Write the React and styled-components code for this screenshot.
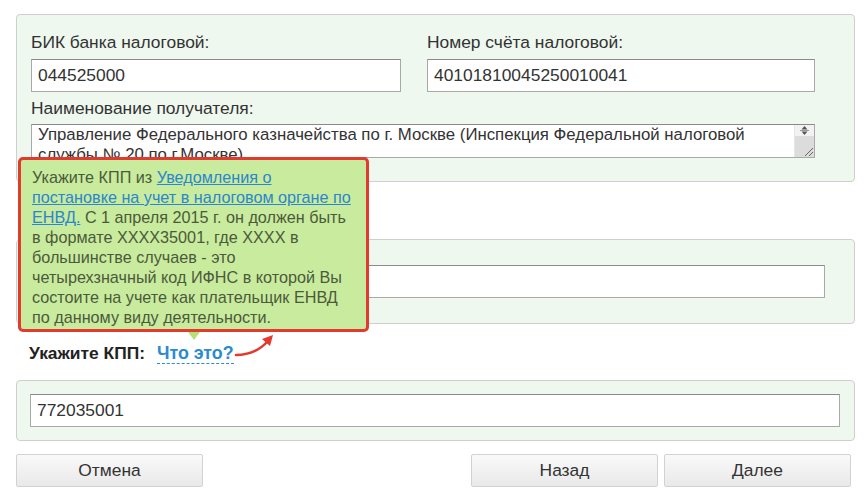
import React from "react";
import styled, { createGlobalStyle } from "styled-components";

const GlobalStyle = createGlobalStyle`
  html, body {
    margin: 0;
    padding: 0;
    background: #fff;
    font-family: "Liberation Sans", Arial, sans-serif;
  }
`;

const Page = styled.div`
  position: relative;
  width: 839px;
  padding-left: 16px;
  padding-top: 14px;
  height: 481px;
  overflow: hidden;
`;

const Panel = styled.div`
  background: #eef8ef;
  border: 1px solid #cfcfcf;
  border-radius: 4px;
  padding: ${(p) => p.$pad};
  margin-top: ${(p) => p.$top || "0"};
`;

const Grid = styled.div`
  display: grid;
  grid-template-columns: 370px 388px;
  column-gap: 26px;
`;

const Field = styled.div`
  display: flex;
  flex-direction: column;
`;

const Label = styled.div`
  font-size: 17.4px;
  line-height: 20px;
  color: #333;
  margin-bottom: ${(p) => p.$gap || "9px"};
  margin-top: ${(p) => p.$top || "0"};
`;

const Input = styled.div`
  box-sizing: border-box;
  height: 33px;
  background: #fff;
  border: 1px solid #a9a9a9;
  border-top-color: #8a8a8a;
  padding: 0 6px;
  font-size: 17.4px;
  line-height: 31px;
  color: #333;
  white-space: nowrap;
  overflow: hidden;
`;

const TextArea = styled.div`
  box-sizing: border-box;
  height: 34px;
  background: #fff;
  border: 1px solid #a9a9a9;
  border-top-color: #8a8a8a;
  display: flex;
  overflow: hidden;
`;

const AreaText = styled.div`
  flex: 1;
  padding: 0 6px;
  font-size: 16.8px;
  line-height: 20px;
  color: #333;
  margin-top: 0;
`;

const ScrollBar = styled.div`
  width: 19px;
  display: flex;
  flex-direction: column;
  border-left: 1px solid #e6e6e6;
`;

const ScrollTop = styled.div`
  height: 11px;
  background: #f2f2f2;
  display: flex;
  align-items: center;
  justify-content: center;
`;

const ScrollTrack = styled.div`
  flex: 1;
  background: #dcdcdc;
  display: flex;
  align-items: flex-end;
  justify-content: flex-end;
`;

const KppRow = styled.div`
  display: flex;
  align-items: baseline;
  gap: 12px;
  padding-left: 13px;
  margin-top: 18px;
  margin-bottom: 16px;
  font-size: 17.4px;
  line-height: 22px;
  font-weight: bold;
`;

const KppLabel = styled.span`
  color: #222;
`;

const WhatLink = styled.span`
  color: #2a8bd0;
  border-bottom: 1px dashed #2a8bd0;
  font-size: 17.8px;
  line-height: 20px;
`;

const Buttons = styled.div`
  display: flex;
  margin-top: 13px;
  width: 835px;
`;

const Button = styled.button`
  box-sizing: border-box;
  width: 187px;
  height: 33px;
  border: 1px solid #d2d2d2;
  border-radius: 2px;
  background: linear-gradient(#f9f9f9, #e9e9e9);
  font-family: "Liberation Sans", Arial, sans-serif;
  font-size: 17.4px;
  font-weight: normal;
  color: #333;
  margin-left: ${(p) => p.$ml || "0"};
  padding: 0;
`;

const Tooltip = styled.div`
  position: absolute;
  left: 18px;
  top: 157px;
  box-sizing: border-box;
  width: 351px;
  height: 175px;
  background: #c9eb9d;
  border: 3px solid #e23a2e;
  border-radius: 5px;
  padding: 7px 11px;
  font-size: 16.2px;
  line-height: 20px;
  color: #4b5a3c;
  white-space: nowrap;
  &::after {
    content: "";
    position: absolute;
    left: 167px;
    bottom: -11px;
    border-left: 6px solid transparent;
    border-right: 6px solid transparent;
    border-top: 8px solid #b3e27a;
  }
`;

const TipLink = styled.a`
  color: #2a86cf;
  text-decoration: underline;
`;

const Arrow = styled.svg`
  position: absolute;
  left: 232px;
  top: 332px;
`;

const App = () => {
  return (
    <>
      <GlobalStyle />
      <Page>
        <Panel $pad="17px 39px 23px 14px">
          <Grid>
            <Field>
              <Label $gap="7px">БИК банка налоговой:</Label>
              <Input>044525000</Input>
            </Field>
            <Field>
              <Label $gap="7px">Номер счёта налоговой:</Label>
              <Input>40101810045250010041</Input>
            </Field>
          </Grid>
          <Label $top="6px" $gap="6px">Наименование получателя:</Label>
          <TextArea>
            <AreaText>
              Управление Федерального казначейства по г. Москве (Инспекция Федеральной налоговой
              службы № 20 по г.Москве)
            </AreaText>
            <ScrollBar>
              <ScrollTop>
                <svg width="9" height="11" viewBox="0 0 9 11">
                  <path d="M4.5 1 L7.5 4.5 L1.5 4.5 Z" fill="#555" />
                  <path d="M0 5.5 H9" stroke="#999" strokeWidth="1" />
                  <path d="M4.5 10 L7.5 6.5 L1.5 6.5 Z" fill="#555" />
                </svg>
              </ScrollTop>
              <ScrollTrack>
                <svg width="12" height="12" viewBox="0 0 12 12">
                  <path d="M11 3 L3 11 M11 7 L7 11" stroke="#666" strokeWidth="1" />
                </svg>
              </ScrollTrack>
            </ScrollBar>
          </TextArea>
        </Panel>

        <Panel $top="57px" $pad="25px 29px 25px 14px">
          <Input />
        </Panel>

        <KppRow>
          <KppLabel>Укажите КПП:</KppLabel>
          <WhatLink>Что это?</WhatLink>
        </KppRow>

        <Panel $pad="13px 14px 13px 13px">
          <Input>772035001</Input>
        </Panel>

        <Buttons>
          <Button>Отмена</Button>
          <Button $ml="268px">Назад</Button>
          <Button $ml="6px">Далее</Button>
        </Buttons>

        <Tooltip>
          Укажите КПП из <TipLink>Уведомления о<br />постановке на учет в налоговом органе по<br />ЕНВД.</TipLink> С 1 апреля 2015 г. он должен быть
          <br />в формате XXXX35001, где XXXX в
          <br />большинстве случаев - это
          <br />четырехзначный код ИФНС в которой Вы
          <br />состоите на учете как плательщик ЕНВД
          <br />по данному виду деятельности.
        </Tooltip>

        <Arrow width="46" height="28" viewBox="0 0 46 28">
          <path d="M4 23 C 18 23, 28 18, 36 9" stroke="#e5392d" strokeWidth="2.5" fill="none" strokeLinecap="round" />
          <path d="M41 3 L30 7 L38 14 Z" fill="#e5392d" />
        </Arrow>
      </Page>
    </>
  );
};

export default App;
